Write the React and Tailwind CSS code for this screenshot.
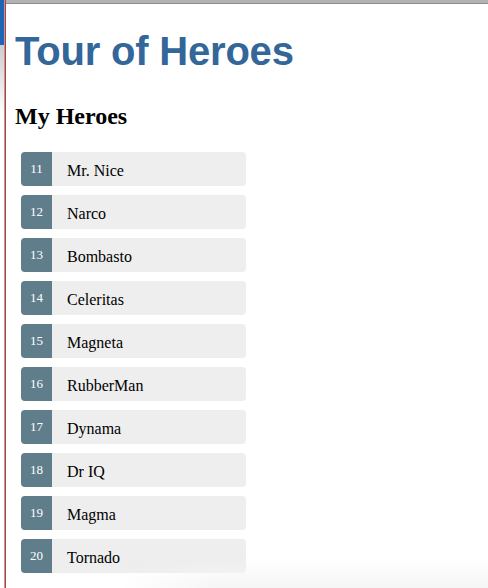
import React from "react";

const heroes = [
  [11, "Mr. Nice"],
  [12, "Narco"],
  [13, "Bombasto"],
  [14, "Celeritas"],
  [15, "Magneta"],
  [16, "RubberMan"],
  [17, "Dynama"],
  [18, "Dr IQ"],
  [19, "Magma"],
  [20, "Tornado"],
];

export default function App() {
  return (
    <div className="relative flex h-[588px] w-[488px] overflow-hidden bg-white">
      <div className="flex w-[4px] flex-col">
        <div className="h-[45px] bg-[#1d66b6]" />
        <div className="h-[70px] bg-gradient-to-b from-[#cdcdcd] to-white" />
      </div>
      <div className="w-px bg-[#a3a3a3]" />
      <div className="w-px bg-[#c8383a]" />
      <div className="flex flex-1 flex-col">
        <div className="h-[3px] bg-[#b3b3b3]" />
        <div className="h-px bg-[#8e8e8e]" />
        <div className="pl-[9px]">
          <h1 className="mt-[24px] font-['Liberation_Sans',Arial,sans-serif] text-[40px] font-bold leading-[46px] tracking-[-0.2px] text-[#336699]">
            Tour of Heroes
          </h1>
          <h2 className="mt-[28px] font-['Liberation_Serif','Times_New_Roman',serif] text-[24px] font-bold leading-[28px] text-black">
            My Heroes
          </h2>
          <ul className="ml-[6px] mt-[22px] flex w-[225px] flex-col gap-[9px] font-['Liberation_Serif','Times_New_Roman',serif]">
            {heroes.map(([id, name]) => (
              <li key={id} className="flex h-[34px] rounded-[4px] bg-[#eeeeee]">
                <span className="flex w-[31px] justify-center rounded-l-[4px] bg-[#607d8b] pt-[10px] text-[13px] leading-[13px] text-white">
                  {id}
                </span>
                <span className="pl-[15px] pt-[9px] text-[16px] leading-[20px] text-black">
                  {name}
                </span>
              </li>
            ))}
          </ul>
        </div>
      </div>
      <div className="pointer-events-none absolute bottom-0 left-[120px] right-0 h-[30px] bg-gradient-to-b from-transparent to-[#f5f5f5] [mask-image:linear-gradient(to_right,transparent,black_100px)]" />
    </div>
  );
}
